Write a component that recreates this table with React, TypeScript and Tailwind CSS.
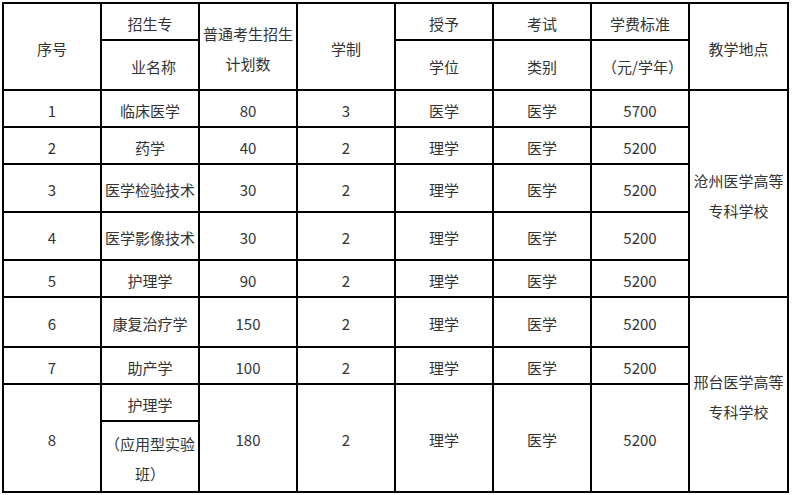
import React from 'react';
import clsx from 'clsx';

type CellProps = {
  children?: React.ReactNode;
  className?: string;
};

// one box of the table; the black grid gap behind it draws the rules
const Cell: React.FC<CellProps> = ({ children, className }) => (
  <div
    className={clsx(
      'bg-white flex items-center justify-center text-center pt-[4px] px-[1px]',
      className
    )}
  >
    <span>{children}</span>
  </div>
);

interface Row {
  no: string;
  major: string;
  plan: string;
  years: string;
  degree: string;
  exam: string;
  fee: string;
  row: string;
}

const rows: Row[] = [
  { no: '1', major: '临床医学', plan: '80', years: '3', degree: '医学', exam: '医学', fee: '5700', row: 'row-start-3' },
  { no: '2', major: '药学', plan: '40', years: '2', degree: '理学', exam: '医学', fee: '5200', row: 'row-start-4' },
  { no: '3', major: '医学检验技术', plan: '30', years: '2', degree: '理学', exam: '医学', fee: '5200', row: 'row-start-5' },
  { no: '4', major: '医学影像技术', plan: '30', years: '2', degree: '理学', exam: '医学', fee: '5200', row: 'row-start-6' },
  { no: '5', major: '护理学', plan: '90', years: '2', degree: '理学', exam: '医学', fee: '5200', row: 'row-start-7' },
  { no: '6', major: '康复治疗学', plan: '150', years: '2', degree: '理学', exam: '医学', fee: '5200', row: 'row-start-8' },
  { no: '7', major: '助产学', plan: '100', years: '2', degree: '理学', exam: '医学', fee: '5200', row: 'row-start-9' },
];

export default function App() {
  return (
    <div className="bg-white w-[792px] h-[495px] pt-[2px] pl-[2px] font-['Noto_Sans_CJK_SC','Noto_Sans',sans-serif] text-[15px] leading-[30px] text-[#333333]">
      <div className="inline-grid bg-black p-[2px] gap-[2px] grid-cols-[96px_96px_96px_96px_96px_96px_96px_97px] grid-rows-[35px_48px_35px_35px_46px_46px_35px_48px_35px_35px_69px]">
        {/* header */}
        <Cell className="col-start-1 row-start-1 row-span-2">序号</Cell>
        <Cell className="col-start-2 row-start-1">招生专</Cell>
        <Cell className="col-start-2 row-start-2 pl-[8px]">业名称</Cell>
        <Cell className="col-start-3 row-start-1 row-span-2">普通考生招生计划数</Cell>
        <Cell className="col-start-4 row-start-1 row-span-2">学制</Cell>
        <Cell className="col-start-5 row-start-1">授予</Cell>
        <Cell className="col-start-5 row-start-2">学位</Cell>
        <Cell className="col-start-6 row-start-1">考试</Cell>
        <Cell className="col-start-6 row-start-2">类别</Cell>
        <Cell className="col-start-7 row-start-1">学费标准</Cell>
        <Cell className="col-start-7 row-start-2 pl-[6px]">（元/学年）</Cell>
        <Cell className="col-start-8 row-start-1 row-span-2">教学地点</Cell>

        {rows.map((r) => (
          <React.Fragment key={r.no}>
            <Cell className={clsx('col-start-1', r.row)}>{r.no}</Cell>
            <Cell className={clsx('col-start-2', r.row)}>{r.major}</Cell>
            <Cell className={clsx('col-start-3', r.row)}>{r.plan}</Cell>
            <Cell className={clsx('col-start-4', r.row)}>{r.years}</Cell>
            <Cell className={clsx('col-start-5', r.row)}>{r.degree}</Cell>
            <Cell className={clsx('col-start-6', r.row)}>{r.exam}</Cell>
            <Cell className={clsx('col-start-7', r.row)}>{r.fee}</Cell>
          </React.Fragment>
        ))}

        {/* row 8, split major cell */}
        <Cell className="col-start-1 row-start-10 row-span-2">8</Cell>
        <Cell className="col-start-2 row-start-10">护理学</Cell>
        <Cell className="col-start-2 row-start-11">（应用型实验班）</Cell>
        <Cell className="col-start-3 row-start-10 row-span-2">180</Cell>
        <Cell className="col-start-4 row-start-10 row-span-2">2</Cell>
        <Cell className="col-start-5 row-start-10 row-span-2">理学</Cell>
        <Cell className="col-start-6 row-start-10 row-span-2">医学</Cell>
        <Cell className="col-start-7 row-start-10 row-span-2">5200</Cell>

        {/* teaching sites */}
        <Cell className="col-start-8 row-start-3 row-span-5">沧州医学高等专科学校</Cell>
        <Cell className="col-start-8 row-start-8 row-span-4">邢台医学高等专科学校</Cell>
      </div>
    </div>
  );
}
